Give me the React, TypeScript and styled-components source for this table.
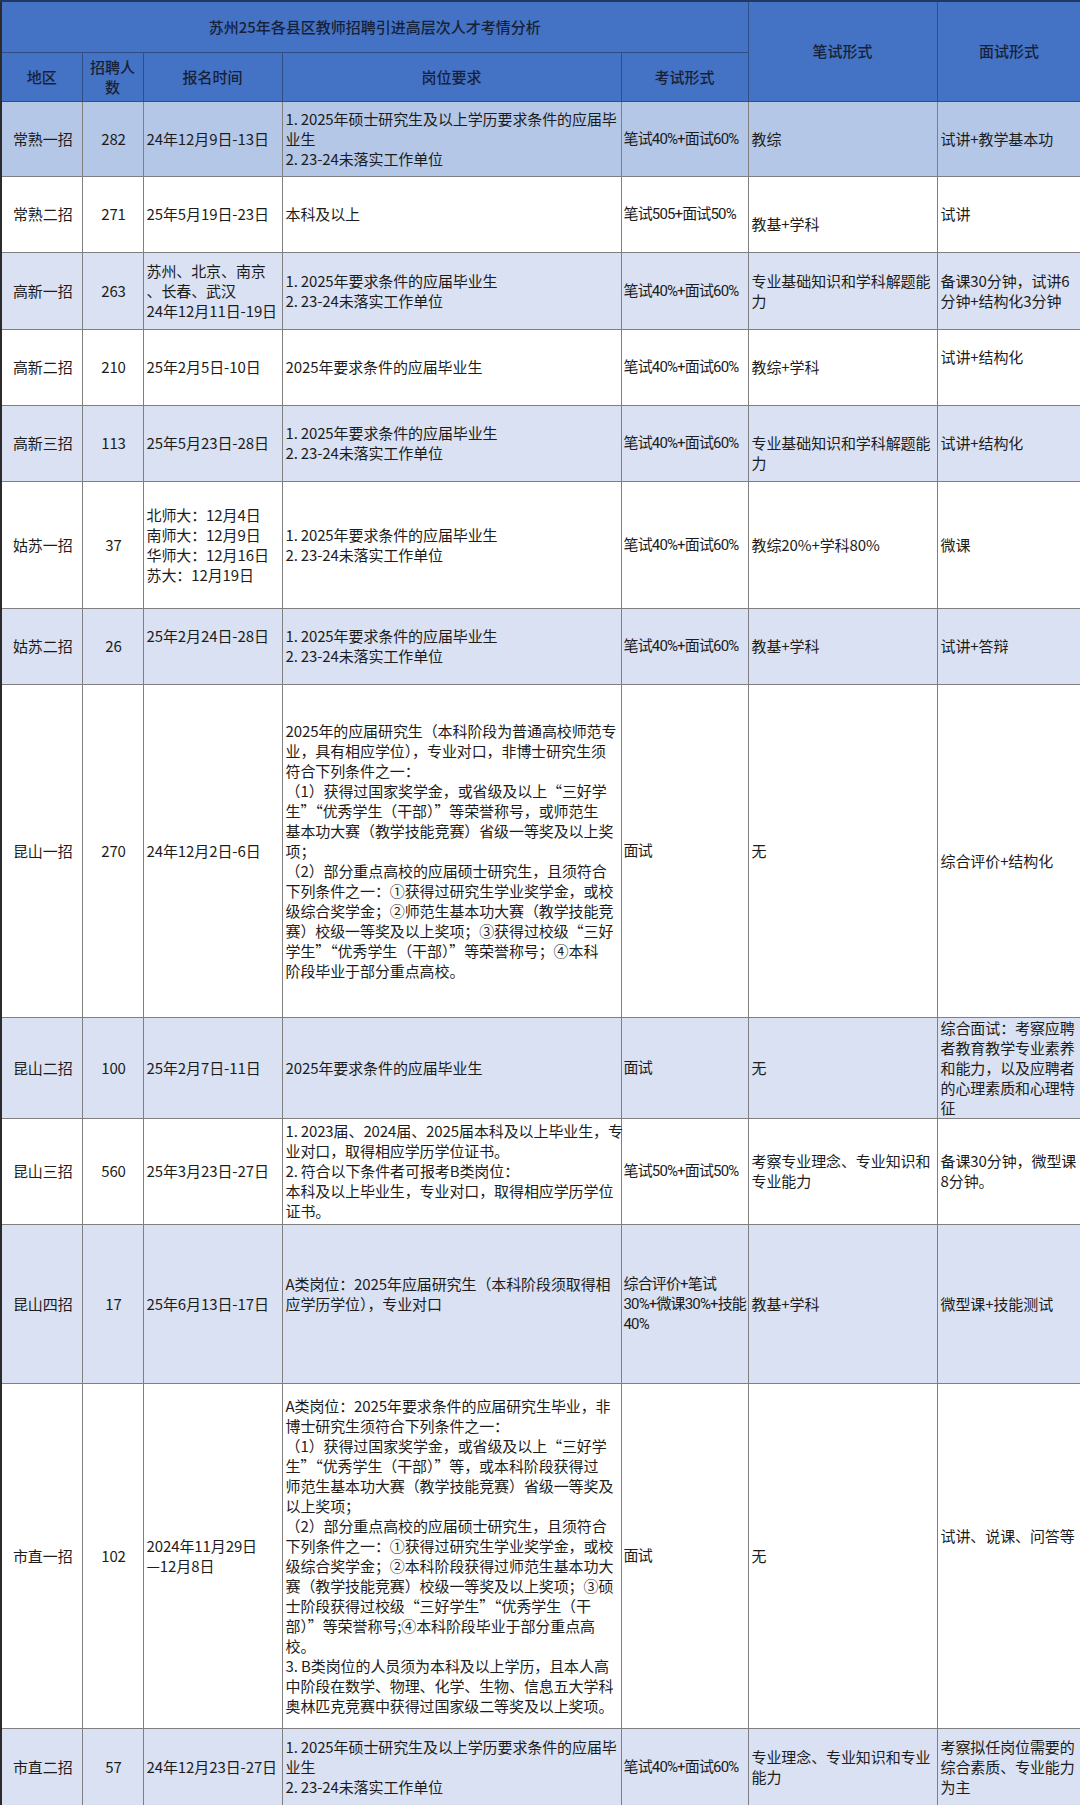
import React from 'react'
import styled, { createGlobalStyle } from 'styled-components'

const GlobalStyle = createGlobalStyle`
  html, body {
    margin: 0;
    padding: 0;
    background: #ffffff;
  }
  body {
    font-family: "Noto Sans CJK SC", "Noto Sans", sans-serif;
  }
`

const Sheet = styled.table`
  width: 1080px;
  border-collapse: collapse;
  table-layout: fixed;
  font-size: 15px;
  line-height: 20px;
  color: #1c1c1c;
  border-top: 2px solid #1f3864;
  border-left: 2px solid #2b2b2b;
  border-bottom: 2px solid #555;
`

const HeadCell = styled.th`
  background: #4472c4;
  color: #17223a;
  font-weight: 500;
  text-align: center;
  vertical-align: middle;
  padding: 0 2px;
  border: 1px solid #2f4e86;
`

const Row = styled.tr<{ $bg: string }>`
  background: ${({ $bg }) => $bg};
`

const Cell = styled.td<{ $center?: boolean; $narrow?: boolean }>`
  border: 1px solid #7f7f7f;
  padding: ${({ $narrow }) => ($narrow ? '0 1px 0 2px' : '0 1px 0 3px')};
  vertical-align: middle;
  text-align: ${({ $center }) => ($center ? 'center' : 'left')};
  letter-spacing: ${({ $narrow }) => ($narrow ? '-0.85px' : '-0.1px')};
  font-family: ${({ $narrow }) =>
    $narrow
      ? '"Liberation Sans Narrow", Roboto, "Noto Sans CJK SC", sans-serif'
      : '"Noto Sans CJK SC", "Noto Sans", sans-serif'};
  overflow: visible;
`

const Line = styled.span`
  display: block;
  white-space: pre;
`

type Text = string | string[]

interface Entry {
  area: string
  count: string
  time: Text
  req: Text
  exam: Text
  written: Text
  interview: Text
  h: number
  bg: string
}

const DEEP = '#b4c7e7'
const LIGHT = '#d9e1f2'
const WHITE = '#ffffff'

// thin space after the list number, as the sheet's half-width digits leave a gap there
const N = '\u2009'

const TWO_LINE_REQ = [`1.${N}2025年要求条件的应届毕业生`, `2.${N}23-24未落实工作单位`]
const MASTER_REQ = [`1.${N}2025年硕士研究生及以上学历要求条件的应届毕`, '业生', `2.${N}23-24未落实工作单位`]

const rows: Entry[] = [
  {
    area: '常熟一招', count: '282', time: '24年12月9日-13日', req: MASTER_REQ,
    exam: '笔试40%+面试60%', written: '教综', interview: '试讲+教学基本功', h: 75, bg: DEEP,
  },
  {
    area: '常熟二招', count: '271', time: '25年5月19日-23日', req: '本科及以上',
    exam: '笔试505+面试50%', written: ['', '教基+学科'], interview: '试讲', h: 76, bg: WHITE,
  },
  {
    area: '高新一招', count: '263', time: ['苏州、北京、南京', '、长春、武汉', '24年12月11日-19日'],
    req: TWO_LINE_REQ, exam: '笔试40%+面试60%', written: ['专业基础知识和学科解题能', '力'],
    interview: ['备课30分钟，试讲6', '分钟+结构化3分钟'], h: 77, bg: LIGHT,
  },
  {
    area: '高新二招', count: '210', time: '25年2月5日-10日', req: '2025年要求条件的应届毕业生',
    exam: '笔试40%+面试60%', written: '教综+学科', interview: ['试讲+结构化', ''], h: 76, bg: WHITE,
  },
  {
    area: '高新三招', count: '113', time: '25年5月23日-28日', req: TWO_LINE_REQ,
    exam: '笔试40%+面试60%', written: ['', '专业基础知识和学科解题能', '力'], interview: '试讲+结构化', h: 76, bg: LIGHT,
  },
  {
    area: '姑苏一招', count: '37', time: ['北师大：12月4日', '南师大：12月9日', '华师大：12月16日', '苏大：12月19日'],
    req: TWO_LINE_REQ, exam: '笔试40%+面试60%', written: '教综20%+学科80%', interview: '微课', h: 127, bg: WHITE,
  },
  {
    area: '姑苏二招', count: '26', time: ['25年2月24日-28日', ''], req: TWO_LINE_REQ,
    exam: '笔试40%+面试60%', written: '教基+学科', interview: '试讲+答辩', h: 76, bg: LIGHT,
  },
  {
    area: '昆山一招', count: '270', time: '24年12月2日-6日',
    req: [
      '2025年的应届研究生（本科阶段为普通高校师范专',
      '业，具有相应学位），专业对口，非博士研究生须',
      '符合下列条件之一：',
      '（1）获得过国家奖学金，或省级及以上“三好学',
      '生”“优秀学生（干部）”等荣誉称号，或师范生',
      '基本功大赛（教学技能竞赛）省级一等奖及以上奖',
      '项；',
      '（2）部分重点高校的应届硕士研究生，且须符合',
      '下列条件之一：①获得过研究生学业奖学金，或校',
      '级综合奖学金；②师范生基本功大赛（教学技能竞',
      '赛）校级一等奖及以上奖项；③获得过校级“三好',
      '学生”“优秀学生（干部）”等荣誉称号；④本科',
      '阶段毕业于部分重点高校。',
    ],
    exam: '面试', written: '无', interview: ['', '综合评价+结构化'], h: 333, bg: WHITE,
  },
  {
    area: '昆山二招', count: '100', time: '25年2月7日-11日', req: '2025年要求条件的应届毕业生',
    exam: '面试', written: '无',
    interview: ['综合面试：考察应聘', '者教育教学专业素养', '和能力，以及应聘者', '的心理素质和心理特', '征'],
    h: 101, bg: LIGHT,
  },
  {
    area: '昆山三招', count: '560', time: '25年3月23日-27日',
    req: [
      `1.${N}2023届、2024届、2025届本科及以上毕业生，专`,
      '业对口，取得相应学历学位证书。',
      `2.${N}符合以下条件者可报考B类岗位：`,
      '本科及以上毕业生，专业对口，取得相应学历学位',
      '证书。',
    ],
    exam: '笔试50%+面试50%', written: ['考察专业理念、专业知识和', '专业能力'],
    interview: ['备课30分钟，微型课', '8分钟。'], h: 106, bg: WHITE,
  },
  {
    area: '昆山四招', count: '17', time: '25年6月13日-17日',
    req: ['A类岗位：2025年应届研究生（本科阶段须取得相', '应学历学位），专业对口', ''],
    exam: ['综合评价+笔试', '30%+微课30%+技能', '40%'], written: '教基+学科', interview: '微型课+技能测试',
    h: 159, bg: LIGHT,
  },
  {
    area: '市直一招', count: '102', time: ['2024年11月29日', '—12月8日'],
    req: [
      'A类岗位：2025年要求条件的应届研究生毕业，非',
      '博士研究生须符合下列条件之一：',
      '（1）获得过国家奖学金，或省级及以上“三好学',
      '生”“优秀学生（干部）”等，或本科阶段获得过',
      '师范生基本功大赛（教学技能竞赛）省级一等奖及',
      '以上奖项；',
      '（2）部分重点高校的应届硕士研究生，且须符合',
      '下列条件之一：①获得过研究生学业奖学金，或校',
      '级综合奖学金；②本科阶段获得过师范生基本功大',
      '赛（教学技能竞赛）校级一等奖及以上奖项；③硕',
      '士阶段获得过校级“三好学生”“优秀学生（干',
      '部）”等荣誉称号;④本科阶段毕业于部分重点高',
      '校。',
      '3. B类岗位的人员须为本科及以上学历，且本人高',
      '中阶段在数学、物理、化学、生物、信息五大学科',
      '奥林匹克竞赛中获得过国家级二等奖及以上奖项。',
    ],
    exam: '面试', written: '无', interview: ['试讲、说课、问答等', '', ''], h: 345, bg: WHITE,
  },
  {
    area: '市直二招', count: '57', time: '24年12月23日-27日', req: MASTER_REQ,
    exam: '笔试40%+面试60%', written: ['专业理念、专业知识和专业', '能力'],
    interview: ['考察拟任岗位需要的', '综合素质、专业能力', '为主'], h: 78, bg: LIGHT,
  },
]

const Lines: React.FC<{ text: Text }> = ({ text }) => {
  const list = Array.isArray(text) ? text : [text]
  return (
    <>
      {list.map((l, i) => (
        <Line key={i}>{l === '' ? '\u00a0' : l}</Line>
      ))}
    </>
  )
}

const COLS = [81, 61, 139, 339, 127, 189, 144]

const App: React.FC = () => {
  return (
    <>
      <GlobalStyle />
      <Sheet>
        <colgroup>
          {COLS.map((w, i) => (
            <col key={i} style={{ width: w }} />
          ))}
        </colgroup>
        <thead>
          <tr style={{ height: 51 }}>
            <HeadCell colSpan={5}>苏州25年各县区教师招聘引进高层次人才考情分析</HeadCell>
            <HeadCell rowSpan={2}>笔试形式</HeadCell>
            <HeadCell rowSpan={2}>面试形式</HeadCell>
          </tr>
          <tr style={{ height: 49 }}>
            <HeadCell>地区</HeadCell>
            <HeadCell>招聘人<br />数</HeadCell>
            <HeadCell>报名时间</HeadCell>
            <HeadCell>岗位要求</HeadCell>
            <HeadCell>考试形式</HeadCell>
          </tr>
        </thead>
        <tbody>
          {rows.map((r) => (
            <Row key={r.area} $bg={r.bg} style={{ height: r.h }}>
              <Cell $center>{r.area}</Cell>
              <Cell $center>{r.count}</Cell>
              <Cell><Lines text={r.time} /></Cell>
              <Cell><Lines text={r.req} /></Cell>
              <Cell $narrow><Lines text={r.exam} /></Cell>
              <Cell><Lines text={r.written} /></Cell>
              <Cell><Lines text={r.interview} /></Cell>
            </Row>
          ))}
        </tbody>
      </Sheet>
    </>
  )
}

export default App
